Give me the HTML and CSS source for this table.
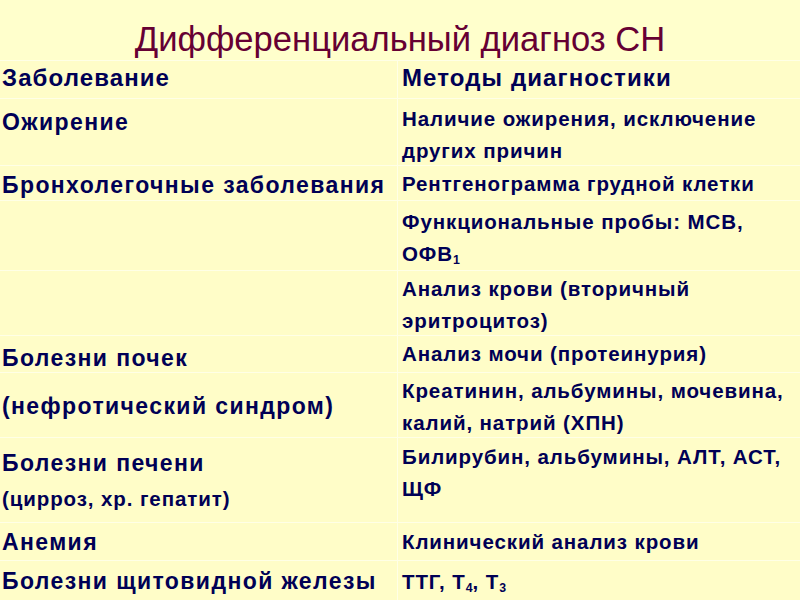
FILE: index.html
```html
<!DOCTYPE html>
<html lang="ru">
<head>
<meta charset="utf-8">
<title>Дифференциальный диагноз СН</title>
<link rel="stylesheet" href="styles.css">
</head>
<body>
<div class="slide">
  <h1 class="title">Дифференциальный диагноз СН</h1>
  <div class="table">
    <div class="cell left head pad-1">Заболевание</div>
    <div class="cell right head pad-1">Методы диагностики</div>

    <div class="cell left pad-7">Ожирение</div>
    <div class="cell right pad-4">Наличие ожирения, исключение других причин</div>

    <div class="cell left pad-3">Бронхолегочные заболевания</div>
    <div class="cell right pad-2">Рентгенограмма грудной клетки</div>

    <div class="cell left"></div>
    <div class="cell right pad-5"><span class="line">Функциональные пробы: МСВ,</span> <span class="line">ОФВ<sub>1</sub></span></div>

    <div class="cell left"></div>
    <div class="cell right pad-2">Анализ крови (вторичный эритроцитоз)</div>

    <div class="cell left pad-6">Болезни почек</div>
    <div class="cell right pad-2">Анализ мочи (протеинурия)</div>

    <div class="cell left pad-17">(нефротический синдром)</div>
    <div class="cell right pad-2">Креатинин, альбумины, мочевина, калий, натрий (ХПН)</div>

    <div class="cell left pad-9"><div>Болезни печени</div><div class="small">(цирроз, хр. гепатит)</div></div>
    <div class="cell right pad-3">Билирубин, альбумины, АЛТ, АСТ, ЩФ</div>

    <div class="cell left pad-3">Анемия</div>
    <div class="cell right pad-3">Клинический анализ крови</div>

    <div class="cell left pad-4">Болезни щитовидной железы</div>
    <div class="cell right pad-5">ТТГ, Т<sub>4</sub>, Т<sub>3</sub></div>
  </div>
</div>
</body>
</html>
```
FILE: styles.css
```css
html, body {
  margin: 0;
  padding: 0;
  background: #ffffcc;
}
.slide {
  width: 800px;
  height: 600px;
  overflow: hidden;
  background: #ffffcc;
  font-family: "Liberation Sans", Arial, sans-serif;
}
.title {
  margin: 0;
  height: 60px;
  box-sizing: border-box;
  padding-top: 17px;
  line-height: 44px;
  font-size: 34.6px;
  font-weight: normal;
  color: #660033;
  text-align: center;
  white-space: nowrap;
}
.table {
  display: grid;
  grid-template-columns: 398px 1fr;
  grid-template-rows: 38px 67px 35px 70px 65px 37px 65px 85px 38px 40px;
  background: #fffdc8;
  border-top: 1px solid #ffffe6;
  color: #000055;
  font-weight: bold;
}
.cell {
  box-sizing: border-box;
  border-bottom: 1px solid #ffffe6;
  line-height: 32px;
  overflow: visible;
}
.left {
  font-size: 23px;
  letter-spacing: 1.4px;
  padding-left: 2px;
  border-right: 1px solid #ffffe6;
  white-space: nowrap;
}
.right {
  font-size: 20.5px;
  letter-spacing: 0.9px;
  padding-left: 4px;
  padding-right: 10px;
}
.line {
  display: inline-block;
  white-space: nowrap;
}
.head {
  font-size: 24px;
  letter-spacing: 1.1px;
}
.small {
  font-size: 20.5px;
  letter-spacing: 0.9px;
  margin-top: 4px;
}
sub {
  font-size: 0.6em;
  letter-spacing: 0;
  line-height: 0;
  vertical-align: -0.25em;
}
.pad-1 { padding-top: 1px; }
.pad-2 { padding-top: 2px; }
.pad-3 { padding-top: 3px; }
.pad-4 { padding-top: 4px; }
.pad-5 { padding-top: 5px; }
.pad-6 { padding-top: 6px; }
.pad-7 { padding-top: 7px; }
.pad-9 { padding-top: 9px; }
.pad-17 { padding-top: 17px; }
```
